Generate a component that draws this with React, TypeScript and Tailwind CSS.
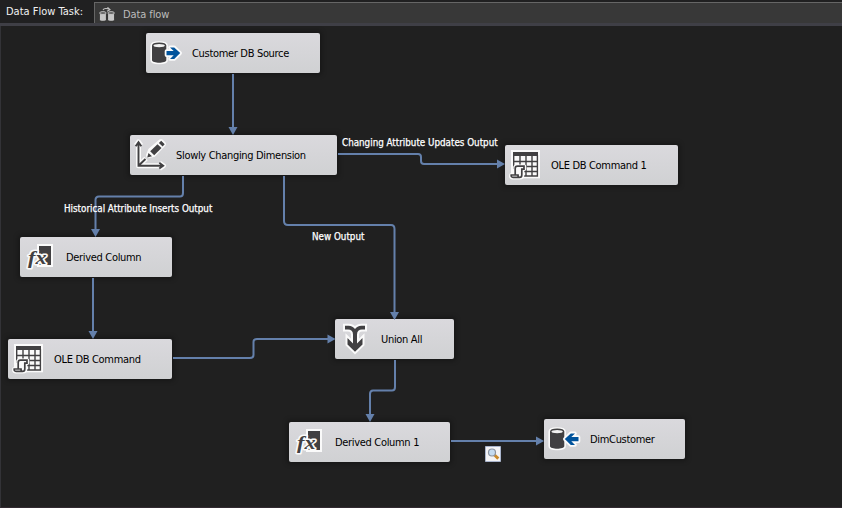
import type { ReactNode } from "react";

const iconClass = "block size-9 shrink-0 overflow-visible";

function Database({ arrow }: { arrow: "left" | "right" }) {
  const d =
    arrow === "right"
      ? "M20.5 16.100H27.700L24 12.400H28.200L34.200 18.100L28.200 24H24L27.700 20.200H20.500Z"
      : "M34.500 16.100H27.300L31 12.400H26.800L20.800 18.100L26.800 24H31L27.300 20.200H34.500Z";
  return (
    <svg viewBox="0 0 36 36" className={iconClass}>
      <path
        d="M6 10.800C6 7 20.300 7 20.300 10.800V25C20.300 28.600 6 28.600 6 25Z"
        fill="#fafafa"
        stroke="#fafafa"
        strokeWidth="3.200"
      />
      <path d="M6 10.500V25C6 28.600 20.300 28.600 20.300 25V10.500Z" fill="#414042" />
      <ellipse cx="13.150" cy="10.600" rx="6.400" ry="2.300" fill="#f2f2f2" stroke="#414042" strokeWidth="1.400" />
      <path d={d} fill="#fafafa" stroke="#fafafa" strokeWidth="3.600" strokeLinejoin="round" />
      <path d={d} fill="#00539c" />
    </svg>
  );
}

function Dimension() {
  return (
    <svg viewBox="0 0 36 36" className={iconClass}>
      <g fill="none" stroke="#fafafa" strokeWidth="5" strokeLinejoin="round">
        <path d="M8.500 4.500V28.700H33.500M8.500 28.700L16 21.500M6 8.500L8.500 5L11 8.500M29.500 26L33.500 28.700L29.500 31.500" />
        <path fill="#fafafa" d="M18.500 18.500L20.500 13.500L31 4.500L33.500 7L23.500 17.500Z" />
      </g>
      <path
        d="M8.500 5V28.700H33M8.500 28.700L15.500 22M5.700 9.200L8.500 5.200L11.300 9.200M29.300 25.800L33.200 28.700L29.300 31.600"
        fill="none"
        stroke="#414042"
        strokeWidth="1.900"
      />
      <path d="M20.200 14.300L27.500 7.200L31.500 11L24.200 18.200Z" fill="#414042" />
      <path d="M28.900 5.900L31.200 3.700L34.700 7.200L32.600 9.500ZM18.500 16L17.200 20.500L22 19.300Z" fill="#414042" />
    </svg>
  );
}

function TableScript() {
  return (
    <svg viewBox="0 0 36 36" className={iconClass}>
      <path d="M6 3H35V31.300H6Z" fill="#fafafa" />
      <path d="M8 5H33V9H8Z" fill="#414042" />
      <path
        d="M8.700 8V22M15 8V20M21 8V29M27 8V29M32.400 8V29H18M8 14.500H33M15 19.500H33M19 24.500H33"
        fill="none"
        stroke="#414042"
        strokeWidth="1.400"
      />
      <path
        d="M11 19.300H19.500V22H17.500V28.500C17.500 30 16.500 30.700 15 30.700H7.500C6 30.700 5.500 29.500 6 28H10V20Z"
        fill="#fafafa"
        stroke="#fafafa"
        strokeWidth="3.600"
        strokeLinejoin="round"
      />
      <path
        d="M10.200 27.500V21.500C10.200 20 10.800 19.200 12.500 19.200H19V22.200H16.800V28C16.800 29.700 16 30.400 14.500 30.400H8C6.400 30.400 6 29.200 6.200 28H13C13 29.500 13.500 30.400 14.500 30.400"
        fill="#fafafa"
        stroke="#414042"
        strokeWidth="1.700"
      />
    </svg>
  );
}

function Formula() {
  return (
    <svg viewBox="0 0 36 36" className={iconClass}>
      <path d="M17 5H33V28H17Z" fill="#fafafa" />
      <path d="M19 7H31V26H19Z" fill="#414042" />
      <text
        x="8"
        y="25.300"
        fontSize="18.500"
        fill="#414042"
        stroke="#fafafa"
        strokeWidth="3"
        strokeLinejoin="round"
        paintOrder="stroke"
        textLength="18.500"
        lengthAdjust="spacingAndGlyphs"
        className="font-['Liberation_Serif',serif] font-bold italic"
      >
        fx
      </text>
    </svg>
  );
}

function Merge() {
  const d =
    "M10 4.700H13.500C16.500 4.700 18.500 6 20 8C21.500 6 23.500 4.700 26.500 4.700H30V8.600H27C24 8.600 22 10.500 22 13.500V22.500L27.500 17V23.500L20 30.800L12.500 23.500V17L18 22.500V13.500C18 10.500 16 8.600 13 8.600H10Z";
  return (
    <svg viewBox="0 0 36 36" className={iconClass}>
      <path d={d} fill="#fafafa" stroke="#fafafa" strokeWidth="4" />
      <path d={d} fill="#414042" />
    </svg>
  );
}

function FlowIcon() {
  return (
    <svg viewBox="0 0 16 16" className="block size-4 shrink-0">
      <path d="M4 3C5 1.200 8 1 10.500 2.500M8.500 .3L11 2.700L8 4.300" fill="none" stroke="#c4c4c4" strokeWidth="1.100" />
      <g fill="#c6c6c6" stroke="#151515" strokeWidth=".7">
        <path d="M.4 6V12.800C.4 14.800 7.400 14.800 7.400 12.800V6Z" />
        <path d="M8.600 6V12.800C8.600 14.800 15.600 14.800 15.600 12.800V6Z" />
        <ellipse cx="3.900" cy="6" rx="3.300" ry="1.500" fill="#666" stroke="#dcdcdc" />
        <ellipse cx="12.100" cy="6" rx="3.300" ry="1.500" fill="#666" stroke="#dcdcdc" />
      </g>
    </svg>
  );
}

function Node({ place, label, icon }: { place: string; label: string; icon: ReactNode }) {
  return (
    <div
      className={`absolute flex h-10 items-center rounded-[2px] bg-linear-to-b from-[#dad9dd] to-[#d0d1d3] shadow-[0_0_5px_2px_rgba(0,0,0,0.3)] ${place}`}
    >
      {icon}
      <span className="ml-2.5 pt-0.5 text-[11px] leading-4 tracking-[-0.32px] whitespace-nowrap text-black">
        {label}
      </span>
    </div>
  );
}

function Caption({ place, label }: { place: string; label: string }) {
  return (
    <span
      className={`absolute text-[9.75px] leading-3 whitespace-nowrap text-white [-webkit-text-stroke:0.25px_white] ${place}`}
    >
      {label}
    </span>
  );
}

const routes = [
  "M233 74V128",
  "M338 154H418Q421 154 421 157V161Q421 164 424 164H498",
  "M183 176V193Q183 196.5 180 196.5H99Q95.500 196.5 95.500 200V230",
  "M284 176V221Q284 225 288 225H391Q394.500 225 394.500 229V313",
  "M93 278V332",
  "M173 358H250Q253.500 358 253.500 355V342Q253.500 339 257 339H328",
  "M395 360V387Q395 390.500 392 390.500H373Q370 390.500 370 394V415",
  "M451 441H537",
];

const heads = [
  "M228.500 127H237.500L233 135Z",
  "M497 159.500V168.500L505 164Z",
  "M91 229H100L95.500 237Z",
  "M390 312H399L394.500 320Z",
  "M88.500 331H97.500L93 339Z",
  "M327.500 334.500V343.500L335.500 339Z",
  "M365.500 414H374.500L370 422Z",
  "M536 436.500V445.500L544 441Z",
];

export default function App() {
  return (
    <div className="relative flex h-[508px] w-[842px] flex-col overflow-hidden bg-[#202020] font-['DejaVu_Sans_Condensed','DejaVu_Sans',sans-serif] [font-stretch:condensed]">
      <header className="flex h-[23px] shrink-0 bg-[#202021]">
        <div className="w-[94px] shrink-0 pt-1 pl-1.5 text-[11px] leading-4 whitespace-nowrap text-[#f1f1f1]">
          Data Flow Task:
        </div>
        <div className="mt-0.5 flex flex-1 items-center gap-2 border-t border-l border-[#666] bg-[#383838] pt-[3px] pl-1 text-[11px] leading-4 tracking-[-0.1px] text-[#bcbcbc]">
          <FlowIcon />
          <span>Data flow</span>
        </div>
      </header>
      <div className="h-[3px] shrink-0 bg-[#3f3f46]" />
      <main className="flex-1 border-b border-l border-b-[#322a31] border-l-[#333337]" />

      <Node place="left-[146px] top-[33px] w-[174px]" label="Customer DB Source" icon={<Database arrow="right" />} />
      <Node place="left-[130px] top-[135px] w-[207px]" label="Slowly Changing Dimension" icon={<Dimension />} />
      <Node place="left-[505px] top-[145px] w-[173px]" label="OLE DB Command 1" icon={<TableScript />} />
      <Node place="left-[20px] top-[237px] w-[152px]" label="Derived Column" icon={<Formula />} />
      <Node place="left-[8px] top-[339px] w-[164px]" label="OLE DB Command" icon={<TableScript />} />
      <Node place="left-[335px] top-[319px] w-[119px]" label="Union All" icon={<Merge />} />
      <Node place="left-[289px] top-[422px] w-[161px]" label="Derived Column 1" icon={<Formula />} />
      <Node place="left-[544px] top-[419px] w-[141px]" label="DimCustomer" icon={<Database arrow="left" />} />

      <svg viewBox="0 0 842 508" className="pointer-events-none absolute inset-0 h-[508px] w-[842px]">
        {routes.map((d) => (
          <path key={d} d={d} fill="none" stroke="#6480ab" strokeWidth="2" />
        ))}
        {heads.map((d) => (
          <path key={d} d={d} fill="#6480ab" />
        ))}
      </svg>

      <Caption place="left-[342px] top-[137px]" label="Changing Attribute Updates Output" />
      <Caption place="left-[64px] top-[203px]" label="Historical Attribute Inserts Output" />
      <Caption place="left-[312px] top-[231px]" label="New Output" />

      <svg viewBox="0 0 16 16" className="absolute top-[446px] left-[485px] size-4">
        <path d="M.5 .5H15.500V15.500H.5Z" fill="#f4f4f6" stroke="#a9b4cb" />
        <path d="M9.500 9L13.300 12.600" stroke="#c98a2b" strokeWidth="3" />
        <circle cx="7" cy="6.500" r="3.500" fill="#c4dcf2" stroke="#8b93a0" strokeWidth="1.200" />
      </svg>
    </div>
  );
}
